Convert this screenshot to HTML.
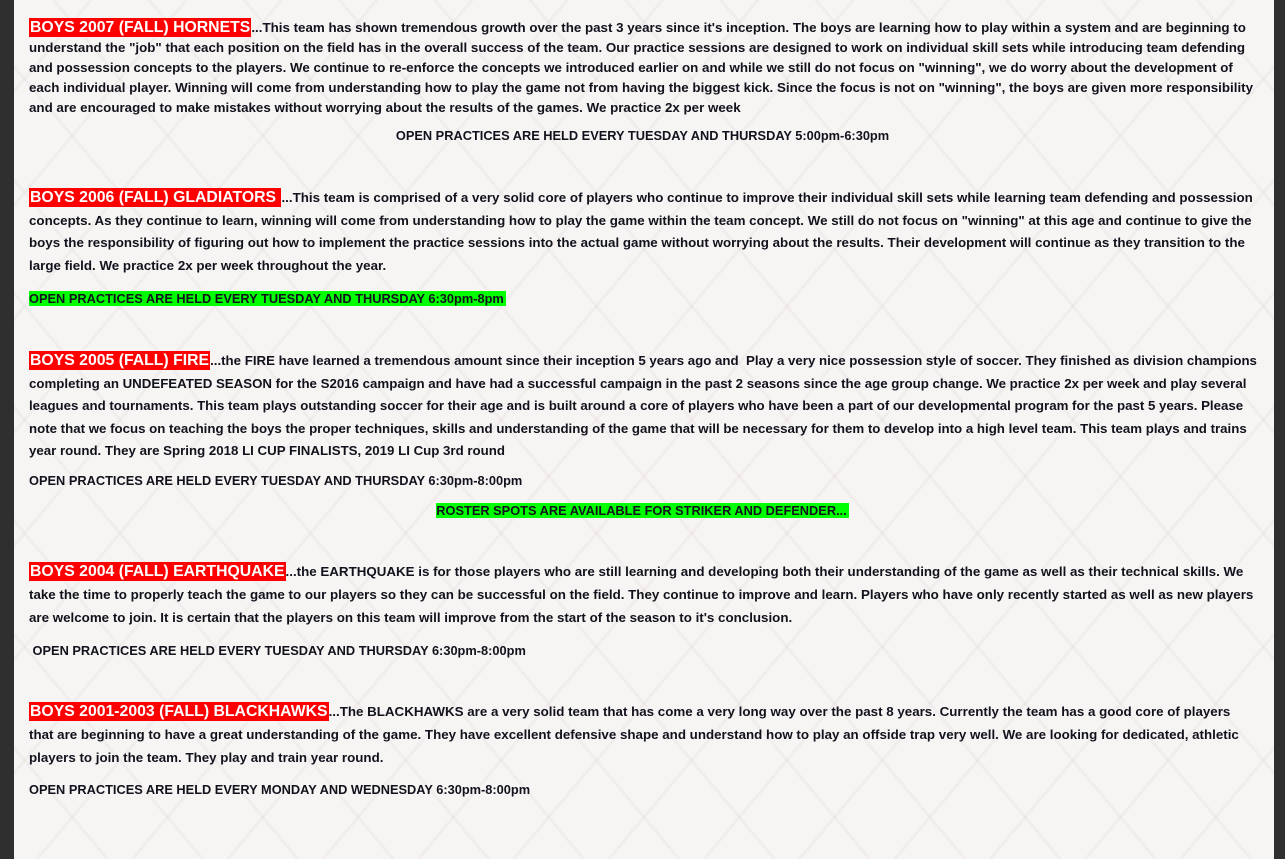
<!DOCTYPE html>
<html><head><meta charset="utf-8"><style>
html,body{margin:0;padding:0}
body{width:1285px;height:859px;overflow:hidden;background:#2f2f2f;position:relative;font-family:"Liberation Sans",Arial,sans-serif;color:#12121c}
#c{position:absolute;left:14px;top:0;width:1260px;height:859px;background:#f7f4f4;
background-image:repeating-linear-gradient(50deg,transparent 0 70px,rgba(200,190,185,.13) 70px 73px),repeating-linear-gradient(-50deg,transparent 0 70px,rgba(200,190,185,.13) 70px 73px)}
.l{position:absolute;left:29px;white-space:nowrap;font-size:13.35px;font-weight:bold;line-height:16px}
.s{font-size:12.8px}
.p3{font-size:13.28px}
.h{background:#ff0000;color:#fff;font-size:15.8px;padding:1px 1px;line-height:18px}
.g{background:#00ff00;font-size:12.8px;padding:0 2px 0 0}
.ctr{left:0;width:1285px;text-align:center}
</style></head><body>
<div id="c"></div>
<div class="l" style="top:19px"><span class="h">BOYS 2007 (FALL) HORNETS</span>...This team has shown tremendous growth over the past 3 years since it's inception. The boys are learning how to play within a system and are beginning to</div>
<div class="l" style="top:40px">understand the "job" that each position on the field has in the overall success of the team. Our practice sessions are designed to work on individual skill sets while introducing team defending</div>
<div class="l" style="top:60px">and possession concepts to the players. We continue to re-enforce the concepts we introduced earlier on and while we still do not focus on "winning", we do worry about the development of</div>
<div class="l" style="top:80px">each individual player. Winning will come from understanding how to play the game not from having the biggest kick. Since the focus is not on "winning", the boys are given more responsibility</div>
<div class="l" style="top:100px">and are encouraged to make mistakes without worrying about the results of the games. We practice 2x per week</div>
<div class="l ctr s" style="top:128px">OPEN PRACTICES ARE HELD EVERY TUESDAY AND THURSDAY 5:00pm-6:30pm</div>

<div class="l" style="top:189px"><span class="h">BOYS 2006 (FALL) GLADIATORS </span> ...This team is comprised of a very solid core of players who continue to improve their individual skill sets while learning team defending and possession</div>
<div class="l" style="top:213px">concepts. As they continue to learn, winning will come from understanding how to play the game within the team concept. We still do not focus on "winning" at this age and continue to give the</div>
<div class="l" style="top:235px">boys the responsibility of figuring out how to implement the practice sessions into the actual game without worrying about the results. Their development will continue as they transition to the</div>
<div class="l" style="top:258px">large field. We practice 2x per week throughout the year.</div>
<div class="l" style="top:291px"><span class="g">OPEN PRACTICES ARE HELD EVERY TUESDAY AND THURSDAY 6:30pm-8pm </span></div>

<div class="l p3" style="top:352px"><span class="h">BOYS 2005 (FALL) FIRE</span>...the FIRE have learned a tremendous amount since their inception 5 years ago and&nbsp; Play a very nice possession style of soccer. They finished as division champions</div>
<div class="l p3" style="top:376px">completing an UNDEFEATED SEASON for the S2016 campaign and have had a successful campaign in the past 2 seasons since the age group change. We practice 2x per week and play several</div>
<div class="l p3" style="top:398px">leagues and tournaments. This team plays outstanding soccer for their age and is built around a core of players who have been a part of our developmental program for the past 5 years. Please</div>
<div class="l p3" style="top:421px">note that we focus on teaching the boys the proper techniques, skills and understanding of the game that will be necessary for them to develop into a high level team. This team plays and trains</div>
<div class="l p3" style="top:443px">year round. They are Spring 2018 LI CUP FINALISTS, 2019 LI Cup 3rd round</div>
<div class="l s" style="top:473px">OPEN PRACTICES ARE HELD EVERY TUESDAY AND THURSDAY 6:30pm-8:00pm</div>
<div class="l ctr" style="top:503px"><span class="g">ROSTER SPOTS ARE AVAILABLE FOR STRIKER AND DEFENDER...</span></div>

<div class="l" style="top:563px"><span class="h">BOYS 2004 (FALL) EARTHQUAKE</span>...the EARTHQUAKE is for those players who are still learning and developing both their understanding of the game as well as their technical skills. We</div>
<div class="l" style="top:587px">take the time to properly teach the game to our players so they can be successful on the field. They continue to improve and learn. Players who have only recently started as well as new players</div>
<div class="l" style="top:610px">are welcome to join. It is certain that the players on this team will improve from the start of the season to it's conclusion.</div>
<div class="l s" style="top:643px">&nbsp;OPEN PRACTICES ARE HELD EVERY TUESDAY AND THURSDAY 6:30pm-8:00pm</div>

<div class="l" style="top:703px"><span class="h">BOYS 2001-2003 (FALL) BLACKHAWKS</span>...The BLACKHAWKS are a very solid team that has come a very long way over the past 8 years. Currently the team has a good core of players</div>
<div class="l" style="top:727px">that are beginning to have a great understanding of the game. They have excellent defensive shape and understand how to play an offside trap very well. We are looking for dedicated, athletic</div>
<div class="l" style="top:750px">players to join the team. They play and train year round.</div>
<div class="l s" style="top:782px">OPEN PRACTICES ARE HELD EVERY MONDAY AND WEDNESDAY 6:30pm-8:00pm</div>
</body></html>
